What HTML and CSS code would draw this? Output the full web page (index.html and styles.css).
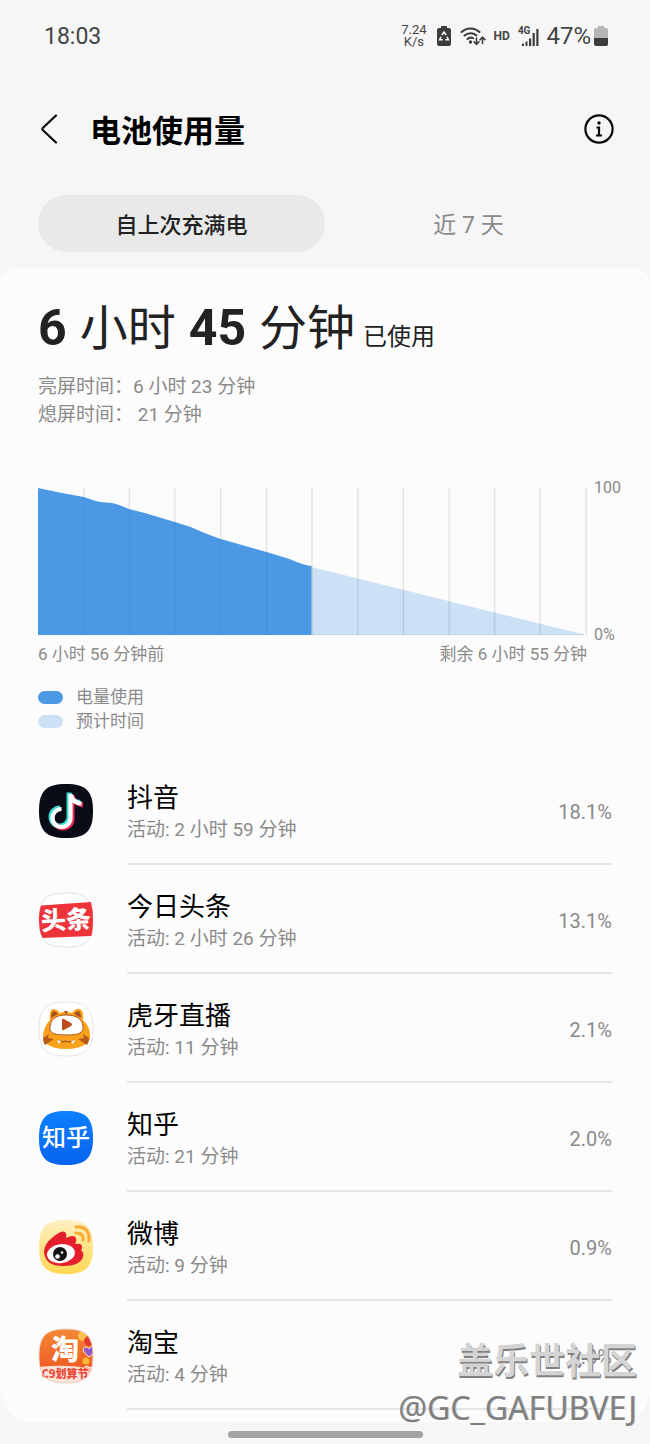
FILE: index.html
```html
<!DOCTYPE html>
<html lang="zh-CN">
<head>
<meta charset="utf-8">
<meta name="viewport" content="width=device-width, initial-scale=1">
<title>电池使用量</title>
<link rel="stylesheet" href="styles.css">
</head>
<body>
<div class="screen">
  <div class="status">
    <span class="clock">18:03</span>
    <div class="status-icons">
      <span class="speed"><span>7.24</span><span>K/s</span></span>
      <svg class="ic-saver" width="14" height="20" viewBox="0 0 14 20"><path d="M4 0h6v2h2a2 2 0 0 1 2 2v14a2 2 0 0 1-2 2H2a2 2 0 0 1-2-2V4a2 2 0 0 1 2-2h2z" fill="#3c3c3c"/><path d="M4.800 9 7 6l2.200 3M10 10.800l1.400 3H8.300M5.700 13.800H2.600L4 10.800" fill="none" stroke="#f6f6f6" stroke-width="1.500"/></svg>
      <svg class="ic-wifi" width="26" height="20" viewBox="0 0 26 20"><g fill="none" stroke="#3c3c3c" stroke-width="2" stroke-linecap="round"><path d="M1.500 6a13 13 0 0 1 18 0M4.500 9.600a9 9 0 0 1 12-.2M7.500 13a5 5 0 0 1 5.500-.8"/><path d="M16.500 12V18M14 15.800l2.500 2.500 2.500-2.500M22.500 17.500v-6M20 13.700l2.500-2.500 2.500 2.500" stroke-width="1.600"/></g><circle cx="10.500" cy="16" r="1.700" fill="#3c3c3c"/></svg>
      <span class="hd">HD</span>
      <span class="signal"><span class="net">4G</span><svg width="17" height="17" viewBox="0 0 17 17"><path d="M0 14.500h2v2.500H0zM3.500 12.500h2V17h-2zM7 9.500h2.200V17H7zM10.600 4h2.200v13h-2.200zM14.300 0h2.200v17h-2.200z" fill="#3c3c3c"/></svg></span>
      <span class="level">47%</span>
      <svg class="ic-batt" width="14" height="20" viewBox="0 0 14 20"><path d="M4 0h6v2h2a2 2 0 0 1 2 2v8H0V4a2 2 0 0 1 2-2h2z" fill="#b5b5b5"/><path d="M0 12h14v6a2 2 0 0 1-2 2H2a2 2 0 0 1-2-2z" fill="#3c3c3c"/></svg>
    </div>
  </div>

  <header class="bar">
    <button class="icon-btn" aria-label="返回"><svg width="18" height="30" viewBox="0 0 18 30"><path d="M16 1.500 3 13.700q-1.300 1.300 0 2.600L16 28.500" fill="none" stroke="#0a0a0a" stroke-width="2.200" stroke-linecap="round"/></svg></button>
    <h1>电池使用量</h1>
    <button class="icon-btn" aria-label="信息"><svg width="30" height="30" viewBox="0 0 30 30"><circle cx="15" cy="15" r="13.600" fill="none" stroke="#0a0a0a" stroke-width="2.200"/><circle cx="15" cy="9" r="1.700" fill="#0a0a0a"/><path d="M12.500 13.500H15V21M12 21.500h6" fill="none" stroke="#0a0a0a" stroke-width="2.200"/></svg></button>
  </header>

  <nav class="tabs">
    <button class="tab active">自上次充满电</button>
    <button class="tab">近 7 天</button>
  </nav>

  <main class="card">
    <h2 class="total"><b>6</b><span>小时</span><b>45</b><span>分钟 <small>已使用</small></span></h2>
    <div class="times">
      <p>亮屏时间：6 小时 23 分钟</p>
      <p>熄屏时间： 21 分钟</p>
    </div>

    <section class="chart">
      <svg class="plot" viewBox="0 0 550 147" preserveAspectRatio="none">
        <path d="M274 79 545 146 274 147z" fill="#cce1f6"/>
        <path d="M0 0 24 5 46 9Q57 13 62 14L74 15Q80 16 91 21L107 25 137 34 153 39Q166 45 183 51L229 64 252 71Q268 78 274 78V147H0z" fill="#4b99e4"/>
        <path d="M274 146.500H547" stroke="#bfd3e8"/>
        <path d="M46 0V147M91.500 0V147M137 0V147M183 0V147M229 0V147M274.500 0V147M320.500 0V147M366 0V147M412 0V147M457.500 0V147M503 0V147M549 0V147" stroke="#000" stroke-opacity=".09" stroke-width="1.600"/>
        <path d="M46 10V147M91.500 22V147M137 35V147M183 52V147M229 65V147" stroke="#4b99e4" stroke-opacity=".6" stroke-width="2"/>
      </svg>
      <div class="scale"><span>100</span><span>0%</span></div>
      <div class="range"><span>6 小时 56 分钟前</span><span>剩余 6 小时 55 分钟</span></div>
    </section>
    <ul class="legend">
      <li><i class="swatch used"></i>电量使用</li>
      <li><i class="swatch left"></i>预计时间</li>
    </ul>

    <ul class="apps">
      <li class="app">
        <svg class="logo" viewBox="0 0 56 56"><path d="M28 1C8 1 1 8 1 28s7 27 27 27 27-7 27-27S48 1 28 1z" fill="#090b17"/>
          <g fill="none" stroke-width="5"><path d="M31 9.500V34a9 9 0 1 1-9-9M31 10c1 6 5 9 11 9.500" stroke="#35dcd4"/><path d="M34 12v24a9 9 0 0 1-16 5.500M34 13c2 6 5 8 11 9" stroke="#ef2c55"/><path d="M32.500 11v24a9 9 0 1 1-9-9M33 12c1 5 4 8 10.500 8.500" stroke="#fff" stroke-width="4.200"/></g></svg>
        <div class="info"><div><h3>抖音</h3><p>活动: 2 小时 59 分钟</p></div><span class="pct">18.1%</span></div>
      </li>
      <li class="app">
        <svg class="logo" viewBox="0 0 56 56"><path d="M28 1C8 1 1 8 1 28s7 27 27 27 27-7 27-27S48 1 28 1z" fill="#fff" stroke="#e2e2e2"/><path d="M3 13.500 53 10q2 8 2 18 0 9-1.500 16L4.500 46Q1 39 1 28 1 19 3 13.500z" fill="#ee343b"/><text x="28" y="37" text-anchor="middle" class="logo-text heavy" font-size="25" transform="rotate(-3 28 28)">头条</text></svg>
        <div class="info"><div><h3>今日头条</h3><p>活动: 2 小时 26 分钟</p></div><span class="pct">13.1%</span></div>
      </li>
      <li class="app">
        <svg class="logo" viewBox="0 0 56 56"><path d="M28 1C8 1 1 8 1 28s7 27 27 27 27-7 27-27S48 1 28 1z" fill="#fff" stroke="#e5e5e5"/>
          <path d="M12 19Q11 9 15 8q4 0 7 4 6-2 12 0 4-5 8-4 4 2 3 11 8 7 7 18-1 4-4 6-7 5-20 5T9 43q-4-2-4-6 0-11 7-18z" fill="#faa21b"/>
          <path d="M13 17q0-7 3-7 2 0 4 3zM43 17q0-7-3-7-2 0-4 3zM26 10l2 4 2-4z" fill="#a9531d"/>
          <path d="M5 37l6-4-1 4 6 1-9 6q-2-3-2-7zM51 37l-6-4 1 4-6 1 9 6q2-3 2-7z" fill="#b65a1b"/>
          <path d="M28 14c11 0 16 4 17 11 1 7-4 9-17 9s-17-2-16-9c1-7 6-11 16-11z" fill="#fff" stroke="#a9531d"/>
          <path d="M24 19q0-2 2-1l7 4q2 1.500 0 3l-7 4q-2 1-2-1z" fill="#bc4d20"/><path d="M20 39q4 3 8 1 4 2 8-1" fill="none" stroke="#a9531d" stroke-width="1.200"/><path d="m19 39 4 1-2 3zM37 39l-4 1 2 3z" fill="#fff"/></svg>
        <div class="info"><div><h3>虎牙直播</h3><p>活动: 11 分钟</p></div><span class="pct">2.1%</span></div>
      </li>
      <li class="app">
        <svg class="logo" viewBox="0 0 56 56"><defs><linearGradient id="zh" x2="0" y2="1"><stop stop-color="#0c80ff"/><stop offset="1" stop-color="#0863ee"/></linearGradient></defs><path d="M28 1C8 1 1 8 1 28s7 27 27 27 27-7 27-27S48 1 28 1z" fill="url(#zh)"/><text x="28" y="36" text-anchor="middle" class="logo-text medium" font-size="24">知乎</text></svg>
        <div class="info"><div><h3>知乎</h3><p>活动: 21 分钟</p></div><span class="pct">2.0%</span></div>
      </li>
      <li class="app">
        <svg class="logo" viewBox="0 0 56 56"><defs><linearGradient id="wb" x2="0" y2="1"><stop stop-color="#fff0c4"/><stop offset="1" stop-color="#ffd751"/></linearGradient></defs><path d="M28 1C8 1 1 8 1 28s7 27 27 27 27-7 27-27S48 1 28 1z" fill="url(#wb)"/>
          <path d="M6 33q0-8 9-15 9-7 12-5 2 2 1 6 8-4 10 0 1 3-1 6 6-1 7 2 1 2-1 4 3 2 2 7-3 9-20 9Q7 47 6 33z" fill="#e51f2b"/><ellipse cx="23" cy="34.500" rx="14" ry="9.500" fill="#fff" transform="rotate(-7 24 35)"/><circle cx="22" cy="35" r="7" fill="#161313"/><circle cx="19.500" cy="37.500" r="2.300" fill="#fff"/><circle cx="24" cy="33.500" r="1.200" fill="#fff"/>
          <path d="M38 8q14-1 13 14M38 14q8 0 7 7" fill="none" stroke="#f6ab35" stroke-width="3.200" stroke-linecap="round"/></svg>
        <div class="info"><div><h3>微博</h3><p>活动: 9 分钟</p></div><span class="pct">0.9%</span></div>
      </li>
      <li class="app">
        <svg class="logo" viewBox="0 0 56 56"><defs><clipPath id="tb"><path d="M28 1C8 1 1 8 1 28s7 27 27 27 27-7 27-27S48 1 28 1z"/></clipPath><linearGradient id="tg" x2="0" y2="1"><stop stop-color="#f28a35"/><stop offset="1" stop-color="#f04b1f"/></linearGradient></defs>
          <g clip-path="url(#tb)"><path d="M0 0h56v56H0z" fill="url(#tg)"/><circle cx="45" cy="8" r="5" fill="#ffc04d"/><circle cx="51" cy="13" r="5" fill="#e63c2e"/><path d="m51 29-5-5q-2-5 2-5 2 0 3 2 2-4 5-1v5z" fill="#9758c7" stroke="#ffe3ce"/><circle cx="48" cy="33" r="3.500" fill="#ffb73b"/><path d="M0 39q28-3 48 1l8 2v14H0z" fill="#fbe3d9"/><path d="m51 46-4-4q-1-4 2-4l3 2 5-3v7z" fill="#ffb5a5" stroke="#fff"/></g>
          <text x="27" y="32" text-anchor="middle" class="logo-text heavy" font-size="28">淘</text><text x="27" y="50" text-anchor="middle" class="logo-text sale" font-size="11">C9划算节</text><path d="M28 1C8 1 1 8 1 28s7 27 27 27 27-7 27-27S48 1 28 1z" fill="none" stroke="#ead8d0"/></svg>
        <div class="info"><div><h3>淘宝</h3><p>活动: 4 分钟</p></div><span class="pct">0.8%</span></div>
      </li>
    </ul>
  </main>
  <div class="handle-row"><span class="handle"></span></div>
  <div class="watermark"><strong>盖乐世社区</strong><span>@GC_GAFUBVEJ</span></div>
</div>
</body>
</html>
```

FILE: styles.css
```css
* { box-sizing: border-box; }
body, h1, h2, h3, p, ul { margin: 0; padding: 0; }
ul { list-style: none; }
svg { display: block; flex: none; }
body { background: #f6f6f6; font-family: Roboto, "Noto Sans CJK SC", sans-serif; color: #000; }
button { border: 0; background: none; padding: 0; font: inherit; color: inherit; }
.screen { position: relative; }

.status { height: 72px; padding: 0 42px 0 44px; display: flex; align-items: center; justify-content: space-between; color: #444; }
.clock { font-size: 23px; }
.status-icons { display: flex; align-items: center; }
.speed { display: flex; flex-direction: column; align-items: center; font-size: 13px; line-height: 12px; margin-right: 10px; }
.ic-wifi { margin: 0 8px 0 9px; }
.hd { font-size: 12px; font-weight: 700; margin-right: 8px; }
.signal { display: flex; align-items: flex-end; }
.signal svg { margin: 3px 0 0 -8px; }
.net { font-size: 10px; line-height: 10px; font-weight: 700; align-self: flex-start; }
.level { font-size: 24px; margin: 0 3px 0 7px; }

.bar { height: 114px; display: flex; align-items: center; padding: 0 36px 0 40px; }
.bar h1 { flex: 1; margin-left: 32px; padding-top: 5px; font-size: 31px; line-height: 40px; font-weight: 700; }
.tabs { display: grid; grid-template-columns: 1fr 1fr; padding: 9px 38px 16px; }
.tab { height: 57px; padding-bottom: 2px; border-radius: 29px; font-size: 23px; color: #8a8a8a; }
.tab.active { background: #e9e9e9; color: #222; font-size: 22px; font-weight: 500; }

.card { background: #fcfcfc; border-radius: 16px 16px 32px 32px; padding: 32px 0 12px; }
.total { padding: 0 38px; display: flex; align-items: baseline; gap: 13px; font-size: 48px; line-height: 56px; font-weight: 400; color: #222; }
.total b { font-size: 50px; font-weight: 700; }
.total small { font-size: 24px; margin-left: -4px; }
.times { padding: 8px 38px 0; font-size: 19px; line-height: 28px; color: #8a8a8a; }

.chart { display: grid; grid-template-columns: 1fr 48px; column-gap: 7px; padding: 59px 8px 0 38px; font-size: 17px; line-height: 20px; color: #8a8a8a; }
.plot { width: 100%; height: 147px; }
.scale { display: flex; flex-direction: column; justify-content: space-between; margin: -10px 0; font-size: 16px; }
.range { display: flex; justify-content: space-between; padding-top: 9px; }
.legend { padding: 21px 38px 0; font-size: 17px; line-height: 24px; color: #8a8a8a; }
.legend li { display: flex; align-items: center; gap: 13px; }
.swatch { width: 25px; height: 13px; border-radius: 7px; }
.used { background: #4b99e4; }
.left { background: #cce1f6; }

.apps { padding-top: 23px; }
.app { height: 109px; display: flex; align-items: center; gap: 33px; padding: 0 38px; }
.logo { width: 56px; height: 56px; }
.info { flex: 1; align-self: stretch; display: flex; align-items: center; justify-content: space-between; padding-top: 5px; border-bottom: 2px solid #e5e5e5; }
.info h3 { font-size: 26px; line-height: 36px; font-weight: 400; }
.info p { font-size: 19px; line-height: 28px; color: #8a8a8a; }
.pct { font-size: 20px; color: #8a8a8a; }
.logo-text { font-family: "Noto Sans CJK SC", sans-serif; fill: #fff; }
.heavy { font-weight: 900; }
.medium { font-weight: 500; }
.sale { font-weight: 900; fill: #ed4937; }

.handle-row { height: 24px; display: flex; align-items: center; justify-content: center; }
.handle { width: 30%; height: 7px; border-radius: 4px; background: #a3a3a3; }
.watermark { position: absolute; right: 13px; bottom: 16px; display: flex; flex-direction: column; align-items: flex-end; color: #d4d4d4; pointer-events: none; }
.watermark strong { font-size: 36px; line-height: 48px; font-weight: 700; text-shadow: 1px 2px 0 #808080; }
.watermark span { font-family: "Noto Sans", sans-serif; font-size: 32px; line-height: 44px; color: #808080; text-shadow: 1px 0 0 #d0d0d0; }
```
